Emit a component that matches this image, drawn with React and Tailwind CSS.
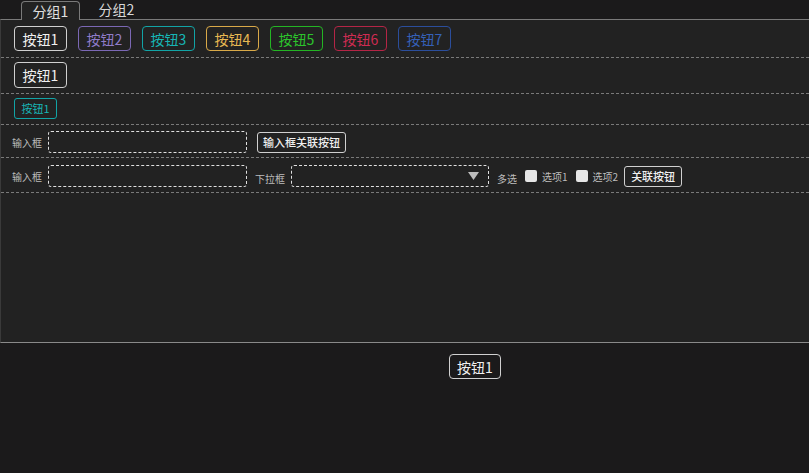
import React from 'react';

const font = { fontFamily: '"Noto Sans CJK SC", "Noto Sans", sans-serif' };

const colorButtons = [
  { label: '按钮1', cls: 'border-[#d0d0d0] text-[#f0f0f0]' },
  { label: '按钮2', cls: 'border-[#7b68b5] text-[#8f7cc9]' },
  { label: '按钮3', cls: 'border-[#12a4a6] text-[#17b5b5]' },
  { label: '按钮4', cls: 'border-[#d9a948] text-[#e8b952]' },
  { label: '按钮5', cls: 'border-[#24b524] text-[#2cc42c]' },
  { label: '按钮6', cls: 'border-[#b52546] text-[#cf2c52]' },
  { label: '按钮7', cls: 'border-[#2b4e9c] text-[#3560b8]' },
];

function Label({ children }) {
  return <span className="text-[10px] text-[#bdbdbd] whitespace-nowrap">{children}</span>;
}

function DashInput({ className = '' }) {
  return <div className={`h-[22px] border border-dashed border-[#e0e0e0] rounded-[3px] ${className}`} />;
}

function Check({ label }) {
  return (
    <div className="flex items-center gap-[5px]">
      <span className="w-[12px] h-[12px] rounded-[2px] bg-[#e6e6e6]" />
      <Label>{label}</Label>
    </div>
  );
}

export default function App() {
  return (
    <div style={font} className="w-[809px] h-[473px] bg-[#1b1a1b] flex flex-col overflow-hidden">
      {/* tabs */}
      <div className="h-[19px] flex items-end pl-[21px] relative z-10">
        <div className="h-[19px] w-[59px] border border-b-0 border-[#7a7a7a] rounded-t-[4px] bg-[#222222] flex items-center justify-center text-[14px] text-[#e0e0e0] -mb-px">
          分组1
        </div>
        <div className="h-[19px] w-[73px] flex items-center justify-center text-[14px] text-[#d8d8d8]">
          分组2
        </div>
      </div>

      {/* panel */}
      <div className="h-[324px] bg-[#222222] border-t border-[#7a7a7a] border-l border-l-[#3a3a3a] border-b border-b-[#8a8a8a] flex flex-col">
        <div className="flex gap-[11px] px-[13px] pt-[6px] pb-[6px] border-b border-dashed border-[#7a7a7a]">
          {colorButtons.map(b => (
            <button key={b.label} className={`h-[25px] w-[53px] border rounded-[4px] text-[14px] leading-none ${b.cls}`}>
              {b.label}
            </button>
          ))}
        </div>

        <div className="flex px-[13px] pt-[4px] pb-[5px] border-b border-dashed border-[#7a7a7a]">
          <button className="h-[26px] w-[53px] border border-[#d0d0d0] rounded-[4px] text-[14px] text-[#f0f0f0] leading-none">
            按钮1
          </button>
        </div>

        <div className="flex px-[13px] pt-[4px] pb-[5px] border-b border-dashed border-[#7a7a7a]">
          <button className="h-[21px] w-[43px] border border-[#12a4a6] rounded-[3px] text-[11px] text-[#17b5b5] leading-none">
            按钮1
          </button>
        </div>

        <div className="flex items-center pl-[11px] pt-[6px] pb-[4px] border-b border-dashed border-[#7a7a7a]">
          <Label>输入框</Label>
          <DashInput className="w-[199px] ml-[6px]" />
          <button className="ml-[10px] h-[21px] w-[89px] border border-[#d0d0d0] rounded-[3px] text-[11px] font-medium text-[#f0f0f0] leading-none">
            输入框关联按钮
          </button>
        </div>

        <div className="flex items-center pl-[11px] pt-[6px] pb-[4px] border-b border-dashed border-[#7a7a7a]">
          <Label>输入框</Label>
          <DashInput className="w-[199px] ml-[6px]" />
          <span className="ml-[8px]"><Label>下拉框</Label></span>
          <div className="ml-[6px] w-[198px] h-[22px] border border-dashed border-[#e0e0e0] rounded-[3px] flex items-center justify-end pr-[9px]">
            <svg width="11" height="8" viewBox="0 0 11 8"><path d="M0 0h11L5.5 8z" fill="#bdbdbd" /></svg>
          </div>
          <span className="ml-[8px]"><Label>多选</Label></span>
          <div className="ml-[8px] flex items-center gap-[8px]">
            <Check label="选项1" />
            <Check label="选项2" />
          </div>
          <button className="ml-[6px] h-[21px] w-[58px] border border-[#d0d0d0] rounded-[3px] text-[11px] font-medium text-[#f0f0f0] leading-none">
            关联按钮
          </button>
        </div>
      </div>

      {/* bottom */}
      <div className="flex-1 flex items-start pl-[449px] pt-[11px]">
        <button className="h-[25px] w-[52px] border border-[#d0d0d0] rounded-[4px] text-[14px] text-[#f0f0f0] leading-none">
          按钮1
        </button>
      </div>
    </div>
  );
}
